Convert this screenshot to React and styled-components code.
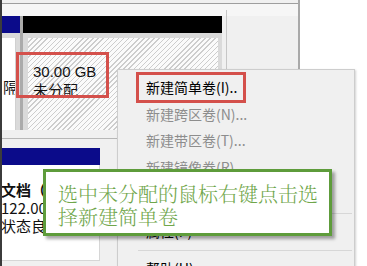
import React from 'react'
import styled, { createGlobalStyle } from 'styled-components'

const GlobalStyle = createGlobalStyle`
  html, body {
    margin: 0;
    padding: 0;
    background: #ffffff;
  }
  * {
    box-sizing: border-box;
  }
`

const menuItems = [
  { label: '新建简单卷(I)..', enabled: true },
  { label: '新建跨区卷(N)...' },
  { label: '新建带区卷(T)...' },
  { label: '新建镜像卷(R)...' },
  { label: '新建 RAID-5 卷(W)...' },
  { separator: true },
  { label: '属性(P)', enabled: true },
  { separator: true },
  { label: '帮助(H)', enabled: true },
]

const App = () => {
  return (
    <>
      <GlobalStyle />
      <Page>
        <Window>
          <LeftStrip />
          <WindowBody>
            <TopBar />
            <DiskRow>
              <Partition $width={18}>
                <PartHeader $color="#0b0b8a" />
                <PartBody $pad="5px 4px 0 0">
                  <WhiteCell>
                    <CellText>隔</CellText>
                  </WhiteCell>
                </PartBody>
              </Partition>
              <Divider />
              <Partition $width={199}>
                <PartHeader $color="#000000" />
                <PartBody $pad="5px 4px 0 5px">
                  <Hatched>
                    <SizeText>30.00 GB</SizeText>
                    <CellText>未分配</CellText>
                  </Hatched>
                </PartBody>
              </Partition>
              <RestColumn />
            </DiskRow>
            <Band />
            <DiskRow>
              <Partition $width={98}>
                <PartHeader $color="#0b0b8a" />
                <InfoCell>
                  <InfoName>文档（</InfoName>
                  <InfoLine>122.00</InfoLine>
                  <InfoLine>状态良</InfoLine>
                </InfoCell>
              </Partition>
            </DiskRow>
          </WindowBody>
        </Window>

        <RedMark $x={16} $y={52} $w={93} $h={46} />

        <Menu>
          {menuItems.map((item, i) =>
            item.separator ? (
              <MenuSeparator key={i} />
            ) : (
              <MenuItem key={i} $enabled={item.enabled}>
                {item.label}
              </MenuItem>
            )
          )}
        </Menu>

        <RedMark $x={136} $y={72} $w={110} $h={31} />

        <Callout>
          选中未分配的鼠标右键点击选
          <br />
          择新建简单卷
        </Callout>
      </Page>
    </>
  )
}

export default App

const Page = styled.div`
  position: relative;
  width: 367px;
  height: 266px;
  overflow: hidden;
  display: flex;
  background: #ffffff;
  font-family: "Noto Sans CJK SC", "Liberation Sans", sans-serif;
`

const Window = styled.div`
  width: 300px;
  height: 100%;
  display: flex;
  background: #f0f0f0;
  border-right: 2px solid #a9a9a9;
`

const LeftStrip = styled.div`
  width: 2px;
  background: #3b3b3b;
`

const WindowBody = styled.div`
  flex: 1;
  display: flex;
  flex-direction: column;
  overflow: hidden;
`

const TopBar = styled.div`
  margin-top: 3px;
  height: 13px;
  border-top: 1px solid #9e9e9e;
  background: #f6f6f6;
`

const DiskRow = styled.div`
  display: flex;
`

const Partition = styled.div`
  width: ${p => p.$width}px;
  display: flex;
  flex-direction: column;
  height: ${p => (p.$width === 98 ? '113px' : '114px')};
`

const PartHeader = styled.div`
  height: 17px;
  flex-shrink: 0;
  background: ${p => p.$color};
`

const PartBody = styled.div`
  flex: 1;
  display: flex;
  padding: ${p => p.$pad};
  background: #dadada;
`

const WhiteCell = styled.div`
  flex: 1;
  background: #ffffff;
  border-right: 1px solid #d0d0d0;
  display: flex;
  flex-direction: column;
  padding: 40px 0 0 1px;
  overflow: hidden;
`

const Divider = styled.div`
  width: 3px;
  background: #ababab;
`

const Hatched = styled.div`
  flex: 1;
  background: repeating-linear-gradient(
    135deg,
    #fbfbfb 0 2.6px,
    #cdcdcd 2.6px 3.6px
  );
  padding: 25px 0 0 5px;
  display: flex;
  flex-direction: column;
`

const SizeText = styled.div`
  font-family: "Liberation Sans", "Noto Sans CJK SC", sans-serif;
  font-size: 15px;
  line-height: 18px;
  color: #111;
`

const CellText = styled.div`
  font-size: 15px;
  line-height: 18px;
  color: #111;
`

const RestColumn = styled.div`
  flex: 1;
  margin: -6px 0 0 4px;
  border-left: 1px solid #c6c6c6;
`

const Band = styled.div`
  height: 18px;
  background: linear-gradient(
    #f0f0f0 0 8px,
    #b7b7b7 8px 9px,
    #f0f0f0 9px
  );
`

const InfoCell = styled.div`
  height: 96px;
  background: #ffffff;
  border-right: 1px solid #d6d6d6;
  border-bottom: 1px solid #d6d6d6;
  padding: 16px 0 0 0;
  margin-left: -1px;
  overflow: hidden;
`

const InfoName = styled.div`
  font-size: 15px;
  line-height: 18px;
  font-weight: bold;
  color: #111;
  white-space: nowrap;
`

const InfoLine = styled.div`
  font-size: 15px;
  line-height: 18px;
  color: #111;
  white-space: nowrap;
`

const RedMark = styled.div`
  position: absolute;
  left: ${p => p.$x}px;
  top: ${p => p.$y}px;
  width: ${p => p.$w}px;
  height: ${p => p.$h}px;
  border: 3px solid #d4504b;
  pointer-events: none;
`

const Menu = styled.div`
  position: absolute;
  left: 117px;
  top: 69px;
  width: 238px;
  height: 220px;
  background: #f0f0f0;
  border: 1px solid #cdcdcd;
  box-shadow: 1px 1px 2px rgba(0, 0, 0, 0.18);
  padding-top: 4px;
`

const MenuItem = styled.div`
  height: 26.5px;
  line-height: 26px;
  padding-left: 28px;
  font-size: 14px;
  color: ${p => (p.$enabled ? '#000000' : '#8d8d8d')};
  white-space: nowrap;
`

const MenuSeparator = styled.div`
  height: 1px;
  margin: 6px 2px 4px 20px;
  background: #d7d7d7;
`

const Callout = styled.div`
  position: absolute;
  left: 43px;
  top: 169px;
  width: 289px;
  height: 67px;
  background: #ffffff;
  border: 3px solid #5e9c3b;
  box-shadow: 3px 3px 3px rgba(0, 0, 0, 0.35);
  padding: 10px 0 0 12px;
  font-family: "Noto Serif CJK SC", "Noto Sans CJK SC", serif;
  font-weight: 300;
  font-size: 20px;
  line-height: 23px;
  color: #6fa64a;
  white-space: nowrap;
`
